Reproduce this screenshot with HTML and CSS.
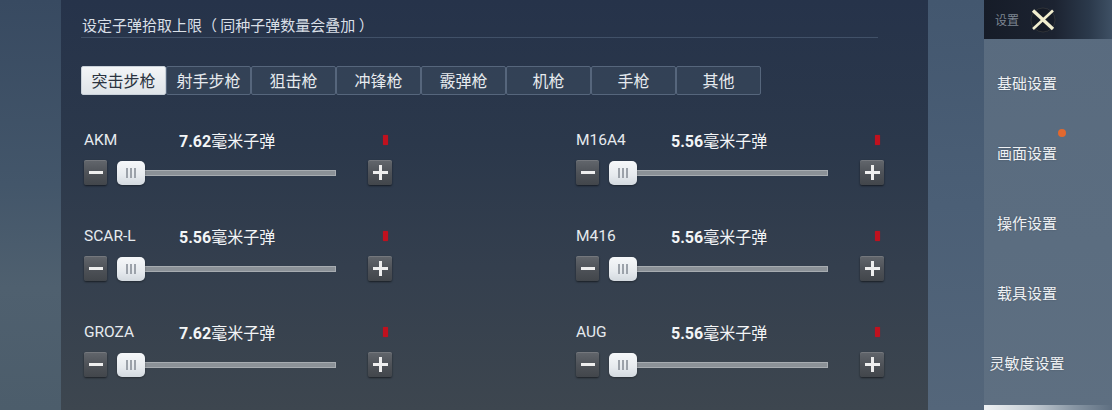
FILE: index.html
```html
<!DOCTYPE html>
<html lang="zh-CN">
<head>
<meta charset="utf-8">
<title>设置 - 子弹拾取上限</title>
<link rel="stylesheet" href="styles.css">
</head>
<body>
<div class="screen">
  <div class="backdrop backdrop-left"></div>

  <main class="panel">
    <h1 class="panel-title">设定子弹拾取上限（ 同种子弹数量会叠加 ）</h1>

    <nav class="tabs">
      <button class="tab active">突击步枪</button>
      <button class="tab">射手步枪</button>
      <button class="tab">狙击枪</button>
      <button class="tab">冲锋枪</button>
      <button class="tab">霰弹枪</button>
      <button class="tab">机枪</button>
      <button class="tab">手枪</button>
      <button class="tab">其他</button>
    </nav>

    <section class="weapons">
      <div class="weapon">
        <div class="weapon-head"><span class="weapon-name">AKM</span><span class="ammo"><b>7.62</b>毫米子弹</span><i class="count"></i></div>
        <div class="weapon-ctrl">
          <button class="step"><svg width="14" height="3" viewBox="0 0 14 3"><rect width="14" height="3" fill="#eeeeee"/></svg></button>
          <div class="slider"><span class="thumb"><i></i><i></i><i></i></span><span class="track"></span></div>
          <button class="step step-plus"><svg width="15" height="15" viewBox="0 0 15 15"><path d="M6 0h3v6h6v3H9v6H6V9H0V6h6z" fill="#eeeeee"/></svg></button>
        </div>
      </div>
      <div class="weapon">
        <div class="weapon-head"><span class="weapon-name">M16A4</span><span class="ammo"><b>5.56</b>毫米子弹</span><i class="count"></i></div>
        <div class="weapon-ctrl">
          <button class="step"><svg width="14" height="3" viewBox="0 0 14 3"><rect width="14" height="3" fill="#eeeeee"/></svg></button>
          <div class="slider"><span class="thumb"><i></i><i></i><i></i></span><span class="track"></span></div>
          <button class="step step-plus"><svg width="15" height="15" viewBox="0 0 15 15"><path d="M6 0h3v6h6v3H9v6H6V9H0V6h6z" fill="#eeeeee"/></svg></button>
        </div>
      </div>
      <div class="weapon">
        <div class="weapon-head"><span class="weapon-name">SCAR-L</span><span class="ammo"><b>5.56</b>毫米子弹</span><i class="count"></i></div>
        <div class="weapon-ctrl">
          <button class="step"><svg width="14" height="3" viewBox="0 0 14 3"><rect width="14" height="3" fill="#eeeeee"/></svg></button>
          <div class="slider"><span class="thumb"><i></i><i></i><i></i></span><span class="track"></span></div>
          <button class="step step-plus"><svg width="15" height="15" viewBox="0 0 15 15"><path d="M6 0h3v6h6v3H9v6H6V9H0V6h6z" fill="#eeeeee"/></svg></button>
        </div>
      </div>
      <div class="weapon">
        <div class="weapon-head"><span class="weapon-name">M416</span><span class="ammo"><b>5.56</b>毫米子弹</span><i class="count"></i></div>
        <div class="weapon-ctrl">
          <button class="step"><svg width="14" height="3" viewBox="0 0 14 3"><rect width="14" height="3" fill="#eeeeee"/></svg></button>
          <div class="slider"><span class="thumb"><i></i><i></i><i></i></span><span class="track"></span></div>
          <button class="step step-plus"><svg width="15" height="15" viewBox="0 0 15 15"><path d="M6 0h3v6h6v3H9v6H6V9H0V6h6z" fill="#eeeeee"/></svg></button>
        </div>
      </div>
      <div class="weapon">
        <div class="weapon-head"><span class="weapon-name">GROZA</span><span class="ammo"><b>7.62</b>毫米子弹</span><i class="count"></i></div>
        <div class="weapon-ctrl">
          <button class="step"><svg width="14" height="3" viewBox="0 0 14 3"><rect width="14" height="3" fill="#eeeeee"/></svg></button>
          <div class="slider"><span class="thumb"><i></i><i></i><i></i></span><span class="track"></span></div>
          <button class="step step-plus"><svg width="15" height="15" viewBox="0 0 15 15"><path d="M6 0h3v6h6v3H9v6H6V9H0V6h6z" fill="#eeeeee"/></svg></button>
        </div>
      </div>
      <div class="weapon">
        <div class="weapon-head"><span class="weapon-name">AUG</span><span class="ammo"><b>5.56</b>毫米子弹</span><i class="count"></i></div>
        <div class="weapon-ctrl">
          <button class="step"><svg width="14" height="3" viewBox="0 0 14 3"><rect width="14" height="3" fill="#eeeeee"/></svg></button>
          <div class="slider"><span class="thumb"><i></i><i></i><i></i></span><span class="track"></span></div>
          <button class="step step-plus"><svg width="15" height="15" viewBox="0 0 15 15"><path d="M6 0h3v6h6v3H9v6H6V9H0V6h6z" fill="#eeeeee"/></svg></button>
        </div>
      </div>
    </section>
  </main>

  <div class="backdrop backdrop-gap"></div>

  <aside class="sidebar">
    <header class="side-head">
      <span class="side-label">设置</span>
      <button class="close">
        <svg width="26" height="26" viewBox="0 0 26 26">
          <circle cx="13" cy="13" r="12" fill="rgba(0,0,0,0.18)" stroke="rgba(150,140,110,0.18)" stroke-width="1"/>
          <path d="M3 3.5 L23 22" stroke="#f2eecf" stroke-width="3.4" stroke-linecap="butt"/>
          <path d="M23 3.5 L3 22" stroke="#f2eecf" stroke-width="2.6" stroke-linecap="butt"/>
        </svg>
      </button>
    </header>
    <ul class="side-menu">
      <li>基础设置</li>
      <li>画面设置<span class="badge"></span></li>
      <li>操作设置</li>
      <li>载具设置</li>
      <li>灵敏度设置</li>
    </ul>
    <div class="side-foot"></div>
  </aside>
</div>
</body>
</html>
```

FILE: styles.css
```css
body {
  margin: 0;
  width: 1112px;
  height: 410px;
  overflow: hidden;
  font-family: Roboto, "Noto Sans CJK SC", sans-serif;
  background: #3f5166;
}

.screen {
  display: flex;
  height: 410px;
}

.backdrop {
  flex: none;
}

.backdrop-left {
  width: 61px;
  background: linear-gradient(180deg, #384a61 0%, #43566a 45%, #4f606f 70%, #4c5d6b 100%);
}

.backdrop-gap {
  width: 56px;
  background: linear-gradient(180deg, #43576f 0%, #4b5f76 50%, #54667a 100%);
}

/* main settings panel */
.panel {
  width: 867px;
  flex: none;
  box-sizing: border-box;
  padding: 15px 0 0 20px;
  background: linear-gradient(180deg, #26334a 0%, #2b384b 35%, #343f4e 65%, #3d464f 100%);
}

.panel-title {
  margin: 0;
  width: 796px;
  padding: 0 0 2px 1px;
  font-family: "Noto Sans CJK SC", sans-serif;
  font-size: 15px;
  line-height: 20px;
  font-weight: 400;
  color: #d9dfe6;
  white-space: pre;
  border-bottom: 1px solid rgba(105, 125, 150, 0.4);
}

.tabs {
  display: flex;
  margin-top: 28px;
  height: 29px;
}

.tab {
  width: 85px;
  height: 29px;
  box-sizing: border-box;
  padding: 0;
  border: 1px solid #56667c;
  border-radius: 2px;
  background: rgba(72, 88, 110, 0.35);
  color: #e6eaee;
  font-family: "Noto Sans CJK SC", sans-serif;
  font-size: 16px;
  line-height: 27px;
}

.tab.active {
  background: linear-gradient(180deg, #f3f5f7, #dfe4e9);
  border-color: #c9d1d9;
  color: #2b3340;
}

/* weapon rows */
.weapons {
  display: grid;
  grid-template-columns: 308px 308px;
  column-gap: 184px;
  row-gap: 41px;
  margin: 35px 0 0 3px;
}

.weapon-head {
  display: flex;
  align-items: center;
  height: 20px;
}

.weapon-name {
  width: 95px;
  font-size: 15.5px;
  color: #e6eaee;
}

.ammo {
  font-size: 16px;
  color: #f3f5f7;
  font-family: "Noto Sans CJK SC", sans-serif;
}

.ammo b {
  font-family: Roboto, sans-serif;
  font-weight: 700;
}

.count {
  margin-left: auto;
  margin-right: 4px;
  width: 5px;
  height: 10px;
  border-radius: 1px;
  background: #c0111e;
  box-shadow: 0 0 1px #c0111e;
}

.weapon-ctrl {
  display: flex;
  align-items: center;
  height: 25px;
  margin-top: 10px;
}

.step {
  flex: none;
  width: 23px;
  height: 25px;
  padding: 0;
  border: none;
  border-radius: 2px;
  background: linear-gradient(180deg, #62666c 0%, #4d5157 55%, #42464b 100%);
  box-shadow: 0 1px 2px rgba(0, 0, 0, 0.55), inset 0 1px 0 rgba(255, 255, 255, 0.12);
  display: flex;
  align-items: center;
  justify-content: center;
}

.step-plus {
  width: 24px;
  margin-left: auto;
}

.slider {
  display: flex;
  align-items: center;
  width: 219px;
  margin-left: 10px;
}

.thumb {
  flex: none;
  width: 28px;
  height: 24px;
  box-sizing: border-box;
  border-radius: 5px;
  background: linear-gradient(180deg, #f6f8fa 0%, #e6eaee 60%, #d3d9df 100%);
  box-shadow: 0 1px 2px rgba(0, 0, 0, 0.35);
  display: flex;
  align-items: center;
  justify-content: center;
  gap: 2px;
  position: relative;
  z-index: 1;
}

.thumb i {
  width: 2px;
  height: 10px;
  background: #9ca2aa;
}

.track {
  flex: 1;
  height: 6px;
  margin-left: -2px;
  box-sizing: border-box;
  border: 1px solid #a7acb1;
  background: #8b9197;
}

/* right-hand navigation */
.sidebar {
  width: 128px;
  flex: none;
  display: flex;
  flex-direction: column;
  background: linear-gradient(180deg, #596b7f 0%, #5b6d80 60%, #5e6f81 100%);
}

.side-head {
  height: 39px;
  flex: none;
  display: flex;
  align-items: center;
  padding-left: 11px;
  background: linear-gradient(90deg, #161c28 0%, #1c2331 55%, #2b394b 82%, #3e5064 100%);
}

.side-label {
  font-family: "Noto Sans CJK SC", sans-serif;
  font-size: 12px;
  color: #7d8591;
}

.close {
  width: 26px;
  height: 26px;
  margin-left: 11px;
  padding: 0;
  border: none;
  background: none;
  display: flex;
}

.side-menu {
  list-style: none;
  margin: 9px 0 0;
  padding: 0;
  width: 86px;
}

.side-menu li {
  position: relative;
  height: 70px;
  line-height: 70px;
  text-align: center;
  font-family: "Noto Sans CJK SC", sans-serif;
  font-size: 15px;
  color: #eef1f4;
  text-shadow: 0 0 2px rgba(0, 0, 0, 0.25);
}

.badge {
  position: absolute;
  left: 74px;
  top: 11px;
  width: 8px;
  height: 8px;
  border-radius: 50%;
  background: #e2682e;
}

.side-foot {
  margin-top: auto;
  height: 5px;
  background: linear-gradient(90deg, #eef1f3 0%, #c8d0d7 35%, #8896a4 70%, #5e6f81 100%);
}
```
